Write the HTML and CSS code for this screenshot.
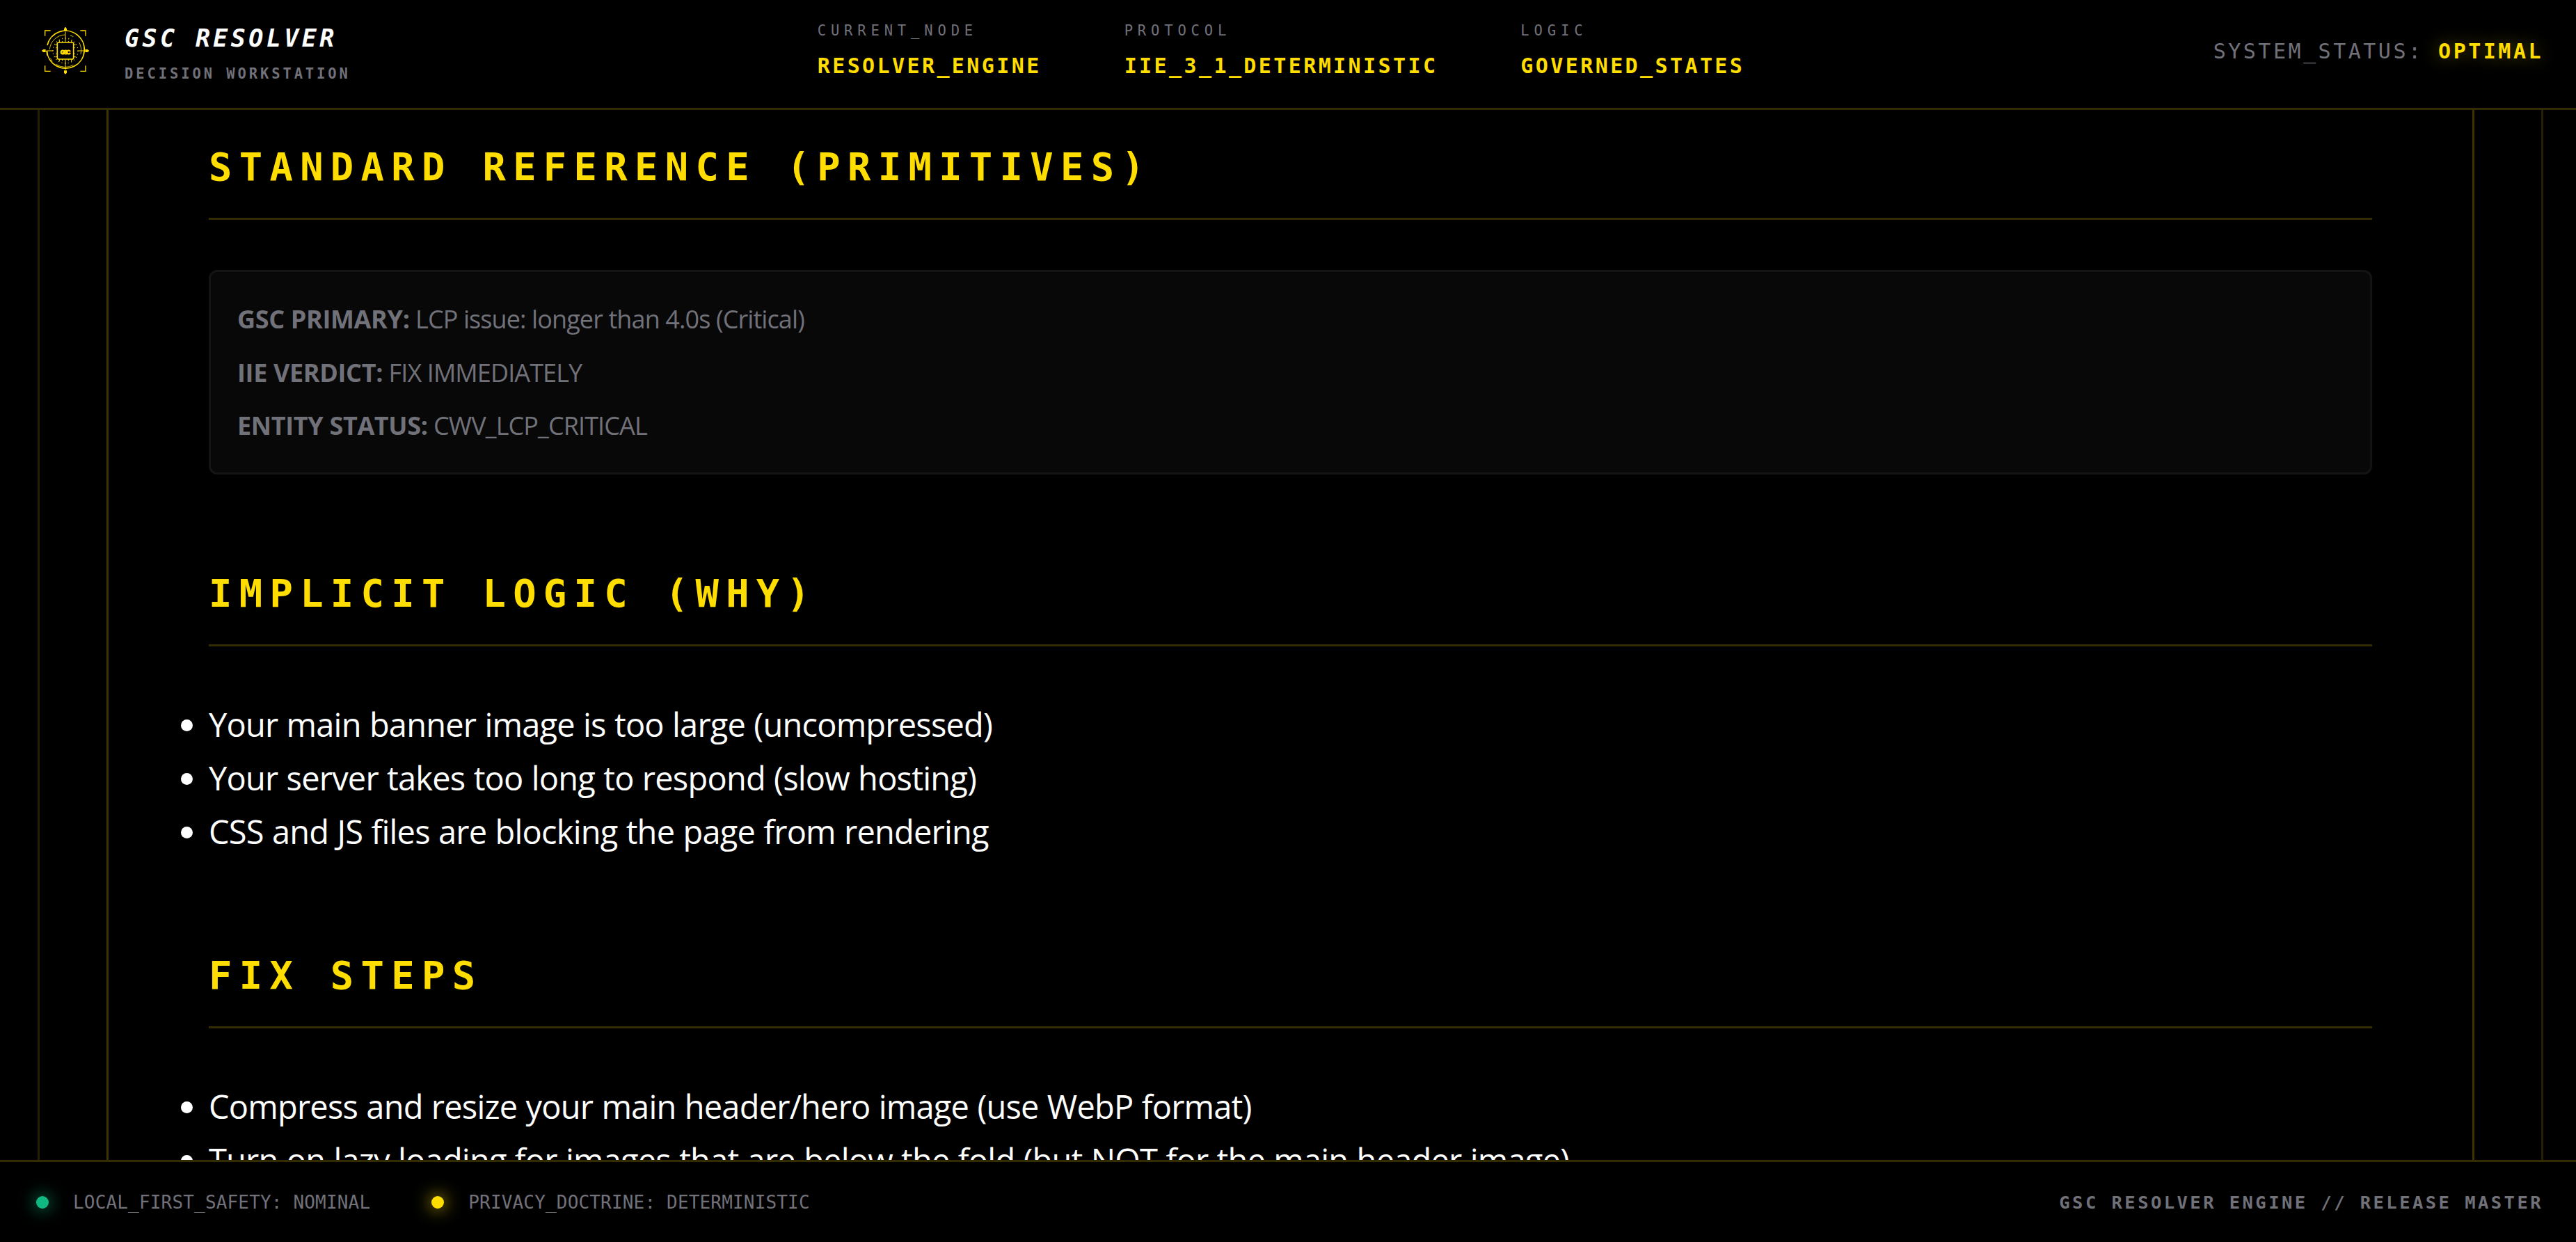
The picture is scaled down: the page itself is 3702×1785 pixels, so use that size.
FILE: index.html
```html
<!DOCTYPE html>
<html lang="en">
  <head>
    <meta charset="UTF-8" />
    <meta name="viewport" content="width=device-width, initial-scale=1.0" />
    <title>GSC Resolver</title>
    <link rel="stylesheet" href="styles.css">
  </head>
  <body>
    <header class="header">
      <div class="brand">
        <svg class="logo" viewBox="0 0 270 270" fill="none" stroke="#ffdd00">
          <!-- corner brackets -->
          <path stroke-width="4" d="M44 80V57H68M196 57H219V80M44 208V232H68M196 232H219V208" />
          <!-- rings -->
          <path stroke-width="5" d="M54 120A81 81 0 1 1 52 144" />
          <path stroke-width="5" d="M52 144A81 81 0 0 0 54 164" />
          <path stroke-width="2.5" d="M64 138A69 69 0 0 1 130 75M191 108A69 69 0 0 1 198 158M166 205A69 69 0 0 1 92 202M153 78A69 69 0 0 1 166 83M67 176A69 69 0 0 0 76 190" />
          <circle cx="132" cy="144" r="54" stroke-width="4" stroke-dasharray="3 11" />
          <!-- crosshair -->
          <path stroke-width="3" d="M132 62V106M132 182V226M50 144H80M184 144H214" />
          <g fill="#ffdd00" stroke="none">
            <path d="M126 47h3v-4h6v4h3v12h-12zM126 229h12v12h-3v3h-6v-3h-3zM47 138v12h-12v-3h-4v-6h4v-3zM217 138h12v3h4v6h-4v3h-12z" />
          </g>
          <!-- chip -->
          <path stroke-width="3" d="M106 108V99M119 108V102M145 108V102M158 108V99M106 180V190M119 180V187M145 180V187M158 180V190M96 118H88M96 131H91M96 157H91M96 170H88M168 118H176M168 131H173M168 157H173M168 170H176" />
          <rect x="97" y="108" width="70" height="72" rx="6" fill="#000" stroke-width="5" />
          <text class="logo-text" x="132" y="158" text-anchor="middle" textLength="44">GSC</text>
        </svg>
        <div class="brand-name">
          <h1>GSC RESOLVER</h1>
          <p>DECISION WORKSTATION</p>
        </div>
      </div>
      <div class="nodes">
        <div class="node">
          <span class="label">CURRENT_NODE</span>
          <span class="value">RESOLVER_ENGINE</span>
        </div>
        <div class="node">
          <span class="label">PROTOCOL</span>
          <span class="value">IIE_3_1_DETERMINISTIC</span>
        </div>
        <div class="node">
          <span class="label">LOGIC</span>
          <span class="value">GOVERNED_STATES</span>
        </div>
      </div>
      <div class="status">SYSTEM_STATUS: <b>OPTIMAL</b></div>
    </header>

    <main class="main">
      <div class="frame">
        <div class="panel">
          <section class="section">
            <h2>STANDARD REFERENCE (PRIMITIVES)</h2>
            <div class="card">
              <p><b>GSC PRIMARY:</b> LCP issue: longer than 4.0s (Critical)</p>
              <p><b>IIE VERDICT:</b> FIX IMMEDIATELY</p>
              <p><b>ENTITY STATUS:</b> CWV_LCP_CRITICAL</p>
            </div>
          </section>
          <section class="section">
            <h2>IMPLICIT LOGIC (WHY)</h2>
            <ul>
              <li>Your main banner image is too large (uncompressed)</li>
              <li>Your server takes too long to respond (slow hosting)</li>
              <li>CSS and JS files are blocking the page from rendering</li>
            </ul>
          </section>
          <section class="section">
            <h2>FIX STEPS</h2>
            <ul>
              <li>Compress and resize your main header/hero image (use WebP format)</li>
              <li>Turn on lazy loading for images that are below the fold (but NOT for the main header image)</li>
            </ul>
          </section>
        </div>
      </div>
    </main>

    <footer class="footer">
      <div class="signals">
        <div class="signal"><i class="dot green"></i>LOCAL_FIRST_SAFETY: NOMINAL</div>
        <div class="signal"><i class="dot yellow"></i>PRIVACY_DOCTRINE: DETERMINISTIC</div>
      </div>
      <div class="release">GSC RESOLVER ENGINE // RELEASE MASTER</div>
    </footer>
  </body>
</html>
```
FILE: styles.css
```css
* {
  margin: 0;
  padding: 0;
  box-sizing: border-box;
}
body {
  display: flex;
  flex-direction: column;
  height: 100vh;
  overflow: hidden;
  background-color: #000;
  color: #fff;
  font-family: "Segoe UI", "Open Sans", sans-serif;
}

.header,
.footer,
h2 {
  font-family: "DejaVu Sans Mono", monospace;
}

/* header */
.header {
  display: flex;
  flex: none;
  height: 158px;
  padding: 0 47px 0 50px;
  border-bottom: 3px solid #332c00;
}
.brand {
  display: flex;
  flex: 1;
}
.logo {
  width: 90px;
  height: 90px;
  margin-top: 25px;
}
.logo-text {
  fill: #ffdd00;
  stroke-width: 3px;
  font-size: 25px;
  font-weight: bold;
  font-family: "Liberation Sans", sans-serif;
}
.brand-name {
  display: flex;
  flex-direction: column;
  row-gap: 15px;
  padding: 33px 0 0 39px;
}
h1 {
  font-size: 35px;
  font-style: italic;
  line-height: 44px;
  letter-spacing: 4.4px;
}
.brand-name p {
  color: #71717a;
  font-size: 20.5px;
  font-weight: bold;
  line-height: 28px;
  letter-spacing: 3.9px;
}
.nodes {
  display: flex;
  column-gap: 119px;
  margin-right: 23px;
  padding-top: 30px;
}
.node {
  display: flex;
  flex-direction: column;
  row-gap: 17px;
}
.label {
  color: #71717a;
  font-size: 20.5px;
  line-height: 28px;
  letter-spacing: 6.85px;
}
.value {
  color: #ffdd00;
  font-size: 30px;
  font-weight: bold;
  line-height: 40px;
  letter-spacing: 3.4px;
}
.status {
  flex: 1;
  padding-top: 54px;
  color: #71717a;
  font-size: 30px;
  line-height: 40px;
  letter-spacing: 3.5px;
  text-align: right;
}
.status b {
  color: #ffdd00;
  text-shadow: 0 0 24px rgba(255, 221, 0, 0.4);
}

/* content */
.main {
  flex: 1;
  min-height: 0;
  padding: 0 47px 0 54px;
  overflow: hidden;
}
.frame {
  padding: 0 96px;
  border: solid #261f00;
  border-width: 0 3px;
}
.panel {
  padding: 50px 144px;
  border: solid #3d3400;
  border-width: 0 3px;
}
.section + .section {
  margin-top: 138px;
}
h2 {
  padding-bottom: 41px;
  border-bottom: 3px solid #332c00;
  color: #ffdd00;
  font-size: 55.5px;
  line-height: 64px;
  letter-spacing: 10.3px;
}
.card {
  margin: 72px 0 139px;
  padding: 30px 38px 28px;
  border: 3px solid #141414;
  border-radius: 12px;
  background-color: #080808;
  color: #71717a;
  font-size: 36px;
  line-height: 76.7px;
  letter-spacing: -0.9px;
}
.card b {
  letter-spacing: -0.35px;
}
ul {
  margin: 74px 0 -1px;
}
li {
  font-size: 47px;
  line-height: 76.7px;
  letter-spacing: -0.8px;
  word-spacing: 0.8px;
}

/* footer */
.footer {
  display: flex;
  flex: none;
  justify-content: space-between;
  align-items: center;
  height: 118px;
  padding: 0 47px 0 52px;
  border-top: 3px solid #332c00;
  color: #71717a;
  font-size: 26px;
  letter-spacing: 0.17px;
}
.signals {
  display: flex;
  column-gap: 88px;
}
.signal {
  display: flex;
  align-items: center;
  column-gap: 35px;
}
.dot {
  width: 18px;
  height: 18px;
  border-radius: 50%;
}
.green {
  background-color: #10b981;
  box-shadow: 0 0 24px #10b981;
}
.yellow {
  background-color: #ffdd00;
  box-shadow: 0 0 24px #ffdd00;
}
.release {
  font-size: 25.5px;
  font-weight: bold;
  letter-spacing: 3.45px;
}
```
